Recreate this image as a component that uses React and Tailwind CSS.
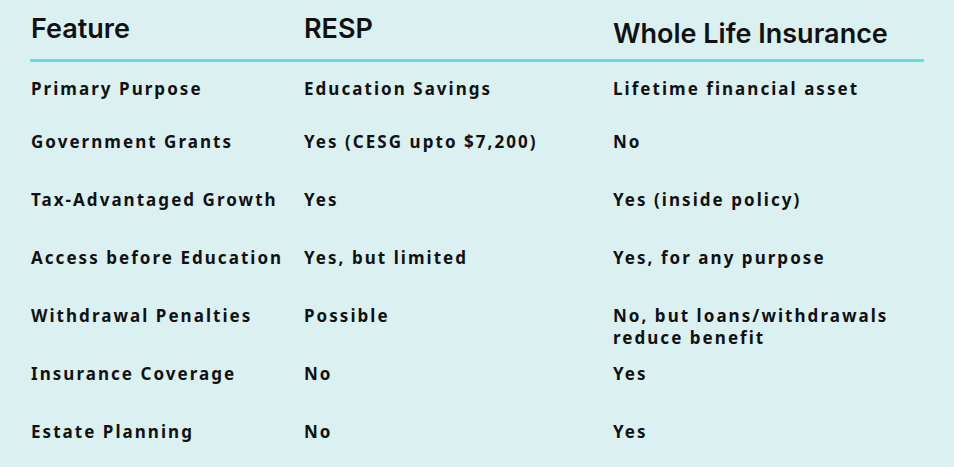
import React from "react";

const rows = [
  ["Primary Purpose", "Education Savings", "Lifetime financial asset"],
  ["Government Grants", "Yes (CESG upto $7,200)", "No"],
  ["Tax-Advantaged Growth", "Yes", "Yes (inside policy)"],
  ["Access before Education", "Yes, but limited", "Yes, for any purpose"],
  ["Withdrawal Penalties", "Possible", "No, but loans/withdrawals reduce benefit"],
  ["Insurance Coverage", "No", "Yes"],
  ["Estate Planning", "No", "Yes"],
];

const App = () => {
  return (
    <div className="w-[954px] h-[467px] bg-[#daf0f1] px-[30px] text-[#111]">
      {/* header */}
      <div className="grid grid-cols-[273px_309px_1fr] h-[62px] border-b-[3px] border-[#5ee0e6] font-['Inter',sans-serif] font-semibold text-[27px] leading-none">
        <div className="pt-[15px] pl-px">Feature</div>
        <div className="pt-[15px] pl-px">RESP</div>
        <div className="pt-[20px] pl-px">Whole Life Insurance</div>
      </div>

      {/* rows */}
      <div className="font-['Noto_Sans',sans-serif] font-bold text-[17px] leading-[22px] tracking-[0.12em]">
        {rows.map((r, i) => (
          <div
            key={i}
            className={`grid grid-cols-[273px_309px_1fr] items-start pt-[16px] ${i === 0 ? "h-[53px]" : "h-[58px]"}`}
          >
            <div className="pl-px whitespace-nowrap">{r[0]}</div>
            <div className="pl-px whitespace-nowrap">{r[1]}</div>
            <div className="pl-px pr-4">{r[2]}</div>
          </div>
        ))}
      </div>
    </div>
  );
};

export default App;
